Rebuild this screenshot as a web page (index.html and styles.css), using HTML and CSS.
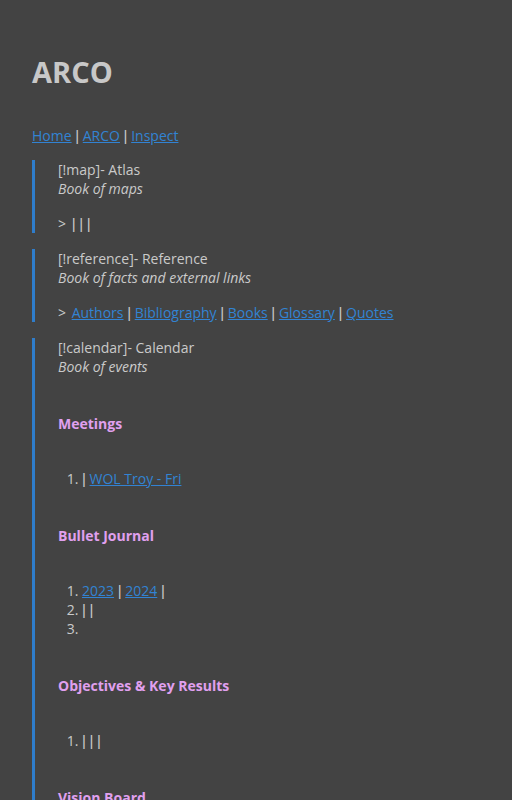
FILE: index.html
```html
<!DOCTYPE html>
<html>
<head>
<meta charset="utf-8">
<link rel="stylesheet" href="styles.css">
</head>
<body>
<main class="page">
  <h1 class="title">ARCO</h1>
  <p class="nav"><a href="#">Home</a> <span class="pipe">|</span> <a href="#">ARCO</a> <span class="pipe">|</span> <a href="#">Inspect</a></p>

  <blockquote class="callout">
    <p>[!map]- Atlas<br><em>Book of maps</em></p>
    <p><span class="gt">&gt;</span> <span class="pipe">|</span> <span class="pipe">|</span> <span class="pipe">|</span></p>
  </blockquote>

  <blockquote class="callout">
    <p>[!reference]- Reference<br><em>Book of facts and external links</em></p>
    <p><span class="gt">&gt;</span> <a href="#">Authors</a> <span class="pipe">|</span> <a href="#">Bibliography</a> <span class="pipe">|</span> <a href="#">Books</a> <span class="pipe">|</span> <a href="#">Glossary</a> <span class="pipe">|</span> <a href="#">Quotes</a></p>
  </blockquote>

  <blockquote class="callout">
    <p>[!calendar]- Calendar<br><em>Book of events</em></p>
    <h4>Meetings</h4>
    <ol>
      <li><span class="pipe">|</span> <a href="#">WOL Troy - Fri</a></li>
    </ol>
    <h4>Bullet Journal</h4>
    <ol>
      <li><a href="#">2023</a> <span class="pipe">|</span> <a href="#">2024</a> <span class="pipe">|</span></li>
      <li><span class="pipe">|</span> <span class="pipe">|</span></li>
      <li></li>
    </ol>
    <h4>Objectives &amp; Key Results</h4>
    <ol>
      <li><span class="pipe">|</span> <span class="pipe">|</span> <span class="pipe">|</span></li>
    </ol>
    <h4>Vision Board</h4>
  </blockquote>
</main>
</body>
</html>
```

FILE: styles.css
```css
html, body {
  margin: 0;
  padding: 0;
  background: #434343;
}
body {
  font-family: "Open Sans", "Noto Sans", sans-serif;
  font-size: 14px;
  line-height: 19px;
  color: #cacaca;
}
.page {
  padding: 46px 32px 0 32px;
}
.title {
  font-size: 29px;
  line-height: 52px;
  font-weight: 700;
  margin: 0 0 28px 0;
  color: #c8c8c8;
}
a {
  color: #3283d3;
  text-decoration: underline;
}
p {
  margin: 16px 0;
}
.nav {
  margin: 0 0 15px 0;
}
.pipe {
  font-family: "Liberation Sans", sans-serif;
  font-size: 15px;
}
.gt {
  margin-right: 2px;
}
.callout {
  margin: 0 0 16px 0;
  padding: 0 0 0 23px;
  border-left: 3px solid #2f7dcb;
}
.callout > p:first-child { margin-top: 0; }
.callout > p:last-child { margin-bottom: 0; }
h4 {
  font-size: 14px;
  line-height: 19px;
  font-weight: 700;
  color: #e0a0ef;
  margin: 38px 0 36px 0;
}
ol {
  margin: 16px 0;
  padding-left: 24px;
}
li { min-height: 19px; }
```
